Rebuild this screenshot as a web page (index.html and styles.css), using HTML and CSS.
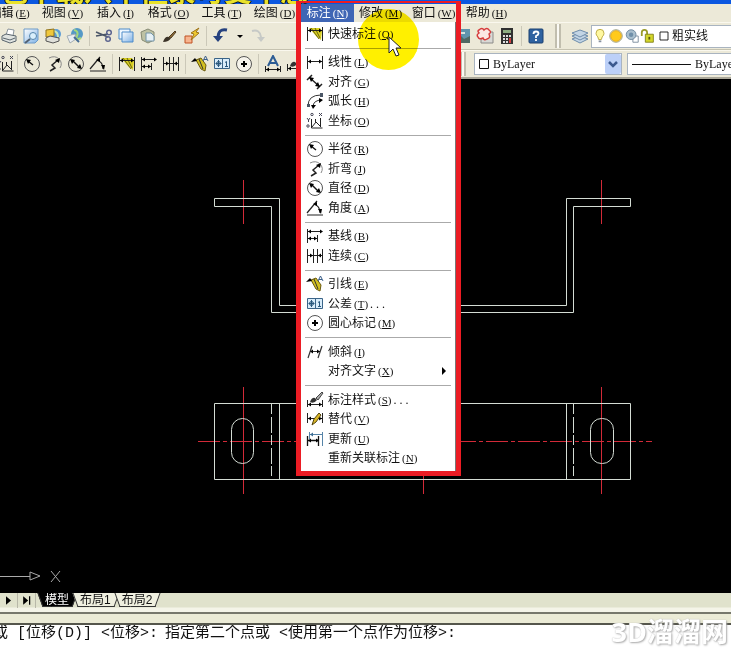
FILE: index.html
```html
<!DOCTYPE html>
<html lang="zh-CN">
<head>
<meta charset="utf-8">
<title>CAD</title>
<link rel="stylesheet" href="styles.css">
</head>
<body>
<svg class="defs" aria-hidden="true">
  <defs>
    <g id="al"><path d="M0 0L3-2V2z"/></g>
    <g id="ar"><path d="M0 0L-3-2V2z"/></g>
    <linearGradient id="blue" x1="0" y1="0" x2="1" y2="1"><stop offset="0" stop-color="#fff"/><stop offset="1" stop-color="#7fb2e6"/></linearGradient>
    <symbol id="quick" viewBox="0 0 18 18"><path d="M3 3h11l2 3-1 9-5-4z" fill="#d8cf20"/><path d="M5 3l8 11M9 3l5 10" stroke="#6b6410"/><path d="M1.500 2v14M16.500 2v14M2 5.500h14" stroke="#222" fill="none"/><use href="#al" x="2" y="5.500"/><use href="#ar" x="16" y="5.500"/></symbol>
    <symbol id="linear" viewBox="0 0 18 18"><path d="M1.500 3v13M16.500 3v13M2 8.500h14" stroke="#222" fill="none"/><use href="#al" x="2" y="8.500"/><use href="#ar" x="16" y="8.500"/></symbol>
    <symbol id="aligned" viewBox="0 0 18 18"><path d="M1 7l5-5M11 16l5-5M4 5l9 8" stroke="#222" stroke-width="1.500" fill="none"/><path d="M3 4l5 1-3 4zM14 14l-5-1 3-4z"/></symbol>
    <symbol id="arc" viewBox="0 0 18 18"><path d="M2 14Q2 3 15 3M7 15Q7 8 16 8" stroke="#333" fill="none"/><path d="M1 12h3v3H1zM14 1h3v4h-3z" fill="#4a5666"/><path d="M5 13h5l-3 4zM13 6l4 2-4 3z"/></symbol>
    <symbol id="ordinate" viewBox="0 0 18 18"><path d="M5.500 7v9h11M6 15l4-5 5 5M9.500 10V7M14.500 6v9" stroke="#222" fill="none"/><path d="M1 6l1.500 2L4 6M2.500 8v2M13 1l3 3M16 1l-3 3" stroke="#445" fill="none"/><circle cx="6" cy="2.500" r="1.200" fill="none" stroke="#445"/><circle cx="2" cy="14" r="1.200" fill="none" stroke="#445"/></symbol>
    <symbol id="radius" viewBox="0 0 18 18"><circle cx="9" cy="9" r="7.500" stroke="#555" fill="none"/><path d="M5 6l5 4" stroke="#111" stroke-width="1.500"/><path d="M3 4l5 1-3 4z"/></symbol>
    <symbol id="jog" viewBox="0 0 18 18"><path d="M4 3q6-3 10 1t1 9" stroke="#888" fill="none"/><path d="M5 16l5-3-3-3 6-5" stroke="#222" stroke-width="1.500" fill="none"/><path d="M15 3l-1 5-4-3z"/></symbol>
    <symbol id="diameter" viewBox="0 0 18 18"><circle cx="9" cy="9" r="7.500" stroke="#555" fill="none"/><path d="M5 5l8 8" stroke="#111" stroke-width="1.500"/><path d="M3 4l5 1-3 4zM15 14l-5-1 3-4z"/></symbol>
    <symbol id="angular" viewBox="0 0 18 18"><path d="M1 16h16M1 14L11 2M8 5q6 2 6 9" stroke="#222" stroke-width="1.200" fill="none"/><path d="M7 5l4-2v4zM12 10h4l-1 5z"/></symbol>
    <symbol id="baseline" viewBox="0 0 18 18"><path d="M1.500 2v14M2 4.500h14M11.500 8v7M2 11.500h9" stroke="#222" fill="none"/><use href="#al" x="2" y="4.500"/><use href="#ar" x="17" y="4.500"/><use href="#al" x="2" y="11.500"/><use href="#ar" x="11" y="11.500"/></symbol>
    <symbol id="continue" viewBox="0 0 18 18"><path d="M1.500 2v14M7.500 2v14M11.500 2v14M16.500 2v14M2 8.500h14" stroke="#222" fill="none"/><use href="#ar" x="7" y="8.500"/><use href="#al" x="12" y="8.500"/></symbol>
    <symbol id="leader" viewBox="0 0 18 18"><path d="M5 5l5-2 5 7-1 6-4-2z" fill="#d2c020" stroke="#6b5a10"/><path d="M8 4l4 10" stroke="#333"/><path d="M0 7l4-4 2 3z"/><path d="M12 6l2.500-5L17 6M13 4.500h3" stroke="#3b5f8a" fill="none"/></symbol>
    <symbol id="tolerance" viewBox="0 0 18 18"><path d="M1.500 3.500h15v10h-15z" fill="#d8ecfa" stroke="#3a6488"/><path d="M9.500 4v10" stroke="#3a6488"/><circle cx="5.500" cy="8.500" r="2" fill="none" stroke="#28577c"/><path d="M5.500 5v7M2.500 8.500h6M12 7.500l1.500-1v5M12 11.500h3" stroke="#28577c" fill="none"/></symbol>
    <symbol id="center" viewBox="0 0 18 18"><circle cx="9" cy="9" r="7.500" stroke="#555" fill="#fff" fill-opacity=".5"/><path d="M9 6v6M6 9h6" stroke="#000" stroke-width="2"/></symbol>
    <symbol id="oblique" viewBox="0 0 18 18"><path d="M2 15L6 3M12 15L16 3M5 8.500h9" stroke="#333" stroke-width="1.200" fill="none"/><use href="#al" x="4" y="8.500"/><use href="#ar" x="14" y="8.500"/></symbol>
    <symbol id="dimstyle" viewBox="0 0 18 18"><path d="M1.500 9v7M16.500 9v7M2 13.500h14" stroke="#222" fill="none"/><use href="#al" x="2" y="13.500"/><use href="#ar" x="16" y="13.500"/><path d="M4 11q2-5 5-4l2 2q-3 4-7 2z" fill="#333"/><path d="M10 7L16 1l1 1-5 7z" fill="#aaa" stroke="#444"/></symbol>
    <symbol id="override" viewBox="0 0 18 18"><path d="M1.500 3v10M16.500 3v10M2 8.500h14" stroke="#222" fill="none"/><use href="#al" x="2" y="8.500"/><use href="#ar" x="16" y="8.500"/><path d="M6 15l2-6 5-6 2 2-5 7z" fill="#d9b625" stroke="#54450e"/></symbol>
    <symbol id="update" viewBox="0 0 18 18"><path d="M3.500 2v7M16.500 2v14M4 4.500h12" stroke="#5684a8" fill="none"/><path d="M1.500 6v10M12.500 6v10M2 10.500h11" stroke="#111" stroke-width="1.300" fill="none"/><use href="#al" x="2" y="10.500"/><use href="#ar" x="13" y="10.500"/><use href="#al" x="4" y="4.500" fill="#3c6d94"/></symbol>
    <symbol id="textdim" viewBox="0 0 18 18"><path d="M4 11L9 1l5 10M6 8h6" stroke="#2c5c94" stroke-width="2" fill="none"/><path d="M1.500 11v6M16.500 11v6M2 14.500h14" stroke="#222" fill="none"/><use href="#al" x="2" y="14.500"/><use href="#ar" x="16" y="14.500"/></symbol>
    <symbol id="print" viewBox="0 0 18 18"><path d="M6 8l2-6 6 1-1 6z" fill="#fff" stroke="#8a949c"/><path d="M2 9l4-2 10 2v5l-6 2-8-3z" fill="#dfe3e0" stroke="#59646c"/><path d="M3 11l7 2 5-2" stroke="#59646c" fill="none"/></symbol>
    <symbol id="preview" viewBox="0 0 18 18"><path d="M2 2h14v11l-3 3H2z" fill="url(#blue)" stroke="#6c9ac8"/><circle cx="11" cy="9" r="3.500" fill="#d9effc" stroke="#5686ac"/><path d="M8 12l-5 4" stroke="#536273" stroke-width="2"/></symbol>
    <symbol id="publish" viewBox="0 0 18 18"><circle cx="12" cy="7" r="5" fill="#5e9ed6"/><path d="M10 4q4 1 4 6" stroke="#c9eab9" stroke-width="2" fill="none"/><path d="M2 3l8-1v7l-8 1z" fill="#f0c83c" stroke="#91731c"/><path d="M2 11l4-2 9 2v3l-6 2-7-2z" fill="#e0e0da" stroke="#555"/></symbol>
    <symbol id="web" viewBox="0 0 18 18"><circle cx="11" cy="7" r="6" fill="#5599c6"/><path d="M8 3q5 1 3 6t4 2" stroke="#a5d77c" stroke-width="2" fill="none"/><path d="M1 9l8-2 1 5-6 4z" fill="#e9edf1" stroke="#a3adb4"/><path d="M8 10l5 5" stroke="#456b95" stroke-width="2"/></symbol>
    <symbol id="cut" viewBox="0 0 18 18"><path d="M1 5l12 5M1 9l12-2" stroke="#4b5668" stroke-width="1.500"/><circle cx="14" cy="5.500" r="2.300" fill="none" stroke="#5c6590" stroke-width="1.500"/><circle cx="13" cy="12" r="2.300" fill="none" stroke="#5c6590" stroke-width="1.500"/></symbol>
    <symbol id="copy" viewBox="0 0 18 18"><path d="M2 2h11v10H2z" fill="#eef7ff" stroke="#4c8bc9"/><path d="M5 5h11v10H5z" fill="url(#blue)" stroke="#4c8bc9"/></symbol>
    <symbol id="paste" viewBox="0 0 18 18"><path d="M2 5l7-3 6 3v8l-6 3-6-3z" fill="#bec2a4" stroke="#858a74"/><path d="M7 6h5l3 3v5H7z" fill="#e6f0f5" stroke="#7394a8"/></symbol>
    <symbol id="brush" viewBox="0 0 18 18"><path d="M2 15q2-6 6-5l2 1q-2 4-8 4z" fill="#3c3428"/><path d="M8 10l6-6 1 1-5 6z" fill="#8e6a35" stroke="#4f3e23"/></symbol>
    <symbol id="blockedit" viewBox="0 0 18 18"><path d="M2 9h7v7H2z" fill="#f7b58f" stroke="#c05324"/><path d="M16 1l-8 5 3 1-3 6 8-7-3-1z" fill="#efc92e" stroke="#9c7218"/></symbol>
    <symbol id="undo" viewBox="0 0 18 18"><path d="M15 3Q6 1 6 11" stroke="#26427f" stroke-width="3" fill="none"/><path d="M1 9h10l-5 6z" fill="#26427f"/></symbol>
    <symbol id="redo" viewBox="0 0 18 18"><path d="M3 4Q11 2 12 10" stroke="#c6c9c6" stroke-width="2" fill="none"/><path d="M8 10h8l-4 5z" fill="#c6c9c6"/></symbol>
    <symbol id="drop" viewBox="0 0 18 18"><path d="M6 8h6L9 11z"/></symbol>
    <symbol id="image" viewBox="0 0 18 18"><path d="M0 2h16v14H0z" fill="#5f94ac"/><path d="M0 11l6-3 4 4 6-3v7H0z" fill="#4f6862"/><path d="M3 6h8" stroke="#d7e5df" stroke-width="2"/></symbol>
    <symbol id="cloud" viewBox="0 0 18 18"><path d="M5 5h12v11H5z" fill="#d9d9d5" stroke="#8b8b88"/><path d="M3 3q3-3 5 0 3-3 5 0 3 2 0 4 2 4-2 5-3 2-4-1-4 2-5-1-2-2 1-4-2-2 0-3z" fill="#fbe7e4" stroke="#d63c3c" stroke-width="1.500"/></symbol>
    <symbol id="calc" viewBox="0 0 18 18"><path d="M3 1h12v16H3z" fill="#303030"/><path d="M5 3h8v3H5z" fill="#8eae83"/><path d="M5 8h2v2H5zM8 8h2v2H8zM11 8h2v2h-2zM5 11h2v2H5zM8 11h2v2H8zM5 14h2v2H5zM8 14h2v2H8z" fill="#ddd"/><path d="M11 11h2v5h-2z" fill="#d04040"/></symbol>
    <symbol id="help" viewBox="0 0 18 18"><rect x="2" y="2" width="14" height="14" rx="1" fill="#2f62a0" stroke="#1c4170"/><path d="M6.500 7q0-2.500 2.500-2.500t2.500 2q0 1.500-2.500 2.500v2M9 12v2" stroke="#fff" stroke-width="1.800" fill="none"/></symbol>
    <symbol id="layers" viewBox="0 0 18 18"><g fill="#c3d5e5" stroke="#6f8dab"><path d="M1 12l8-3 8 3-8 4z"/><path d="M1 9l8-3 8 3-8 4z"/><path d="M1 6l8-3 8 3-8 4z"/></g></symbol>
    <symbol id="bulb" viewBox="0 0 18 18"><path d="M9 1.500q4.500 0 4.500 4.500 0 2-2 4l-1 3h-3l-1-3q-2-2-2-4 0-4.500 4.500-4.500z" fill="#fff8a0" stroke="#b7a53a"/><path d="M7.500 14h3v2h-3z" fill="#8791a0"/></symbol>
    <symbol id="sun" viewBox="0 0 18 18"><circle cx="9" cy="9" r="7" fill="none" stroke="#8b8f68"/><circle cx="9" cy="9" r="6" fill="#ffca1c" stroke="#e0a818"/></symbol>
    <symbol id="freeze" viewBox="0 0 18 18"><path d="M10 9h6v7h-6z" fill="#fff" stroke="#78889a"/><circle cx="8" cy="7.500" r="5.500" fill="#a9bfce" stroke="#68849c"/><circle cx="8" cy="7.500" r="2.500" fill="#6f8fa9"/></symbol>
    <symbol id="lock" viewBox="0 0 18 18"><path d="M2 9V5q0-3 3-3t3 3v5" stroke="#9a9a28" stroke-width="2" fill="none"/><path d="M6 7h9v9H6z" fill="#d3d62a" stroke="#7f8018"/><path d="M10.500 10v3" stroke="#55560c" stroke-width="2"/></symbol>
    <symbol id="square" viewBox="0 0 18 18"><path d="M4.500 4.500h9v9h-9z" fill="#fff" stroke="#111"/></symbol>
  </defs>
</svg>

<div class="app">
  <header class="title"><span class="caption">包下载八个但录可受牛怎</span><span class="caption dark">CAD 2006</span></header>

  <nav class="menubar">
    <button class="menu">编辑<kbd>(<u>E</u>)</kbd></button>
    <button class="menu">视图<kbd>(<u>V</u>)</kbd></button>
    <button class="menu">插入<kbd>(<u>I</u>)</kbd></button>
    <button class="menu">格式<kbd>(<u>O</u>)</kbd></button>
    <button class="menu">工具<kbd>(<u>T</u>)</kbd></button>
    <button class="menu">绘图<kbd>(<u>D</u>)</kbd></button>
    <button class="menu open">标注<kbd>(<u>N</u>)</kbd></button>
    <button class="menu">修改<kbd>(<u>M</u>)</kbd></button>
    <button class="menu">窗口<kbd>(<u>W</u>)</kbd></button>
    <button class="menu">帮助<kbd>(<u>H</u>)</kbd></button>
  </nav>

  <div class="toolbar">
    <div class="tools">
      <button aria-label="打印"><svg><use href="#print"/></svg></button>
      <button aria-label="预览"><svg><use href="#preview"/></svg></button>
      <button aria-label="发布"><svg><use href="#publish"/></svg></button>
      <button aria-label="网络"><svg><use href="#web"/></svg></button>
      <i class="sep"></i>
      <button aria-label="剪切"><svg><use href="#cut"/></svg></button>
      <button aria-label="复制"><svg><use href="#copy"/></svg></button>
      <button aria-label="粘贴"><svg><use href="#paste"/></svg></button>
      <button aria-label="特性匹配"><svg><use href="#brush"/></svg></button>
      <button aria-label="块编辑"><svg><use href="#blockedit"/></svg></button>
      <i class="sep"></i>
      <button aria-label="放弃"><svg><use href="#undo"/></svg></button>
      <button class="narrow" aria-label="放弃列表"><svg><use href="#drop"/></svg></button>
      <button aria-label="重做"><svg><use href="#redo"/></svg></button>
    </div>
    <div class="rest">
      <button aria-label="图纸集"><svg><use href="#image"/></svg></button>
      <button aria-label="标记集"><svg><use href="#cloud"/></svg></button>
      <button aria-label="计算器"><svg><use href="#calc"/></svg></button>
      <i class="sep"></i>
      <button aria-label="帮助"><svg><use href="#help"/></svg></button>
      <i class="grip"></i>
      <button aria-label="图层"><svg><use href="#layers"/></svg></button>
      <button class="layer"><svg><use href="#bulb"/></svg><svg><use href="#sun"/></svg><svg><use href="#freeze"/></svg><svg><use href="#lock"/></svg><svg><use href="#square"/></svg>粗实线</button>
    </div>
  </div>

  <div class="toolbar second">
    <div class="tools">
      <button class="edge" aria-label="坐标"><svg><use href="#ordinate"/></svg></button>
      <i class="sep"></i>
      <button aria-label="半径"><svg><use href="#radius"/></svg></button>
      <button aria-label="折弯"><svg><use href="#jog"/></svg></button>
      <button aria-label="直径"><svg><use href="#diameter"/></svg></button>
      <button aria-label="角度"><svg><use href="#angular"/></svg></button>
      <i class="sep"></i>
      <button aria-label="快速标注"><svg><use href="#quick"/></svg></button>
      <button aria-label="基线"><svg><use href="#baseline"/></svg></button>
      <button aria-label="连续"><svg><use href="#continue"/></svg></button>
      <i class="sep"></i>
      <button aria-label="引线"><svg><use href="#leader"/></svg></button>
      <button aria-label="公差"><svg><use href="#tolerance"/></svg></button>
      <button aria-label="圆心标记"><svg><use href="#center"/></svg></button>
      <i class="sep"></i>
      <button aria-label="编辑标注文字"><svg><use href="#textdim"/></svg></button>
      <button aria-label="标注样式"><svg><use href="#dimstyle"/></svg></button>
    </div>
    <div class="rest">
      <i class="grip"></i>
      <label class="combo color"><svg><use href="#square"/></svg><select aria-label="颜色"><option>ByLayer</option></select><span class="chevron"><svg viewBox="0 0 16 16"><path d="M4 6l4 4 4-4" fill="none" stroke="#3c5a90" stroke-width="2.500"/></svg></span></label>
      <label class="combo linetype"><i class="stroke"></i><select aria-label="线型"><option>ByLayer</option></select></label>
    </div>
  </div>

  <main class="canvas">
    <svg class="drawing" viewBox="0 79 731 514">
      <g fill="none" stroke="#d22a38">
        <path d="M243.500 180V224M601.500 180V224M243.500 387V494M601.500 387V494M423.500 466V494"/>
        <path d="M198 441.500H652" stroke-dasharray="22 3 4 3"/>
      </g>
      <g fill="none" stroke="#d4dcd4">
        <path d="M214.500 198.500H279.500V305.500H566.500V198.500H630.500V206.500H573.500V312.500H271.500V206.500H214.500z"/>
        <path d="M214.500 403.500H630.500V479.500H214.500zM279.500 403V479M566.500 403V479"/>
        <path d="M271.500 404V479M573.500 404V479" stroke-dasharray="10 3 16 2"/>
        <rect x="231.500" y="418.500" width="22" height="45" rx="11"/>
        <rect x="590.500" y="418.500" width="23" height="45" rx="11"/>
      </g>
      <g fill="none" stroke="#aaa">
        <path d="M0 576.500H30M30 572l10 4-10 4zM51 571l9 11M60 571l-9 11"/>
      </g>
    </svg>
  </main>

  <div class="tabs">
    <button class="step" aria-label="下一个"><svg viewBox="0 0 18 18"><path d="M6 4l6 5-6 5z"/></svg></button>
    <button class="step" aria-label="最后"><svg viewBox="0 0 18 18"><path d="M5 4l6 5-6 5zM12 4h1.500v10H12z"/></svg></button>
    <button class="tab current">模型</button>
    <button class="tab">布局1</button>
    <button class="tab">布局2</button>
  </div>
  <div class="splitter"></div>
  <footer class="command"><span>或 [位移(D)] &lt;位移&gt;:</span><span>指定第二个点或 &lt;使用第一个点作为位移&gt;:</span></footer>

  <div class="glow"></div>
  <div class="dropdown">
    <button><svg><use href="#quick"/></svg>快速标注<kbd>(<u>Q</u>)</kbd></button>
    <hr>
    <button><svg><use href="#linear"/></svg>线性<kbd>(<u>L</u>)</kbd></button>
    <button><svg><use href="#aligned"/></svg>对齐<kbd>(<u>G</u>)</kbd></button>
    <button><svg><use href="#arc"/></svg>弧长<kbd>(<u>H</u>)</kbd></button>
    <button><svg><use href="#ordinate"/></svg>坐标<kbd>(<u>O</u>)</kbd></button>
    <hr>
    <button><svg><use href="#radius"/></svg>半径<kbd>(<u>R</u>)</kbd></button>
    <button><svg><use href="#jog"/></svg>折弯<kbd>(<u>J</u>)</kbd></button>
    <button><svg><use href="#diameter"/></svg>直径<kbd>(<u>D</u>)</kbd></button>
    <button><svg><use href="#angular"/></svg>角度<kbd>(<u>A</u>)</kbd></button>
    <hr>
    <button><svg><use href="#baseline"/></svg>基线<kbd>(<u>B</u>)</kbd></button>
    <button><svg><use href="#continue"/></svg>连续<kbd>(<u>C</u>)</kbd></button>
    <hr>
    <button><svg><use href="#leader"/></svg>引线<kbd>(<u>E</u>)</kbd></button>
    <button><svg><use href="#tolerance"/></svg>公差<kbd>(<u>T</u>)</kbd><span class="dots">. . .</span></button>
    <button><svg><use href="#center"/></svg>圆心标记<kbd>(<u>M</u>)</kbd></button>
    <hr>
    <button><svg><use href="#oblique"/></svg>倾斜<kbd>(<u>I</u>)</kbd></button>
    <button><svg></svg>对齐文字<kbd>(<u>X</u>)</kbd><svg class="more" viewBox="0 0 8 8"><path d="M2 0l4 4-4 4z"/></svg></button>
    <hr>
    <button><svg><use href="#dimstyle"/></svg>标注样式<kbd>(<u>S</u>)</kbd><span class="dots">. . .</span></button>
    <button><svg><use href="#override"/></svg>替代<kbd>(<u>V</u>)</kbd></button>
    <button><svg><use href="#update"/></svg>更新<kbd>(<u>U</u>)</kbd></button>
    <button><svg></svg>重新关联标注<kbd>(<u>N</u>)</kbd></button>
  </div>
  <div class="frame"></div>
  <svg class="pointer" viewBox="0 0 14 22"><path d="M1 1v16l4-4 3 7 3-1-3-7h5z" fill="#fff" stroke="#222"/></svg>
  <div class="watermark">3D溜溜网</div>
</div>
</body>
</html>
```
FILE: styles.css
```css
* { box-sizing: border-box; }
body {
  margin: 0;
  font: 12px/16px "Liberation Serif", "Noto Sans CJK SC", serif;
  color: #111;
}
button, select {
  margin: 0;
  padding: 0;
  border: 0;
  background: none;
  font: inherit;
  color: inherit;
}
svg { width: 18px; height: 18px; flex: none; display: block; }
.defs { position: absolute; width: 0; height: 0; }
kbd { font: 11px/16px "Liberation Serif", serif; margin-left: 2px; }

.app {
  position: relative;
  display: flex;
  flex-direction: column;
  height: 100vh;
  overflow: hidden;
  background: #ece9d8;
}

/* Title strip */
.title {
  display: flex;
  gap: 162px;
  height: 4px;
  overflow: hidden;
  background: #0b57e0;
  align-items: flex-end;
}
.caption {
  flex: none;
  font: bold 28px/28px "Noto Sans CJK SC", sans-serif;
  color: #e9e22a;
  text-shadow: 1px 0 #111, -1px 0 #111, 0 1px #111;
}
.caption.dark { font-size: 20px; color: #111; }

/* Menu bar */
.menubar { display: flex; height: 18px; margin-left: -17px; flex: none; }
.menu { width: 53px; flex: none; white-space: nowrap; }
.menu.open { background: #3f66b5; color: #fff; }

/* Toolbars */
.toolbar {
  display: flex;
  height: 28px;
  flex: none;
  border-top: 1px solid #faf8ee;
  border-bottom: 1px solid #c5c2b0;
}
.toolbar.second { height: 29px; border-bottom: 2px solid #a9a698; }
.tools { display: flex; align-items: center; flex: 0 0 454px; margin-left: -2px; overflow: hidden; }
.rest { display: flex; align-items: center; flex: 1; min-width: 0; }
.toolbar button { width: 22px; flex: none; display: flex; justify-content: center; align-items: center; }
.toolbar .narrow { width: 15px; }
.toolbar .edge { width: 16px; }
.sep { width: 1px; height: 20px; margin: 0 3px; background: #cbc8b8; flex: none; }
.grip {
  width: 6px;
  height: 24px;
  margin: 0 8px;
  flex: none;
  border: solid #c1beae;
  border-width: 0 2px;
  background: #fbfaf4;
}
.toolbar .layer {
  flex: 1;
  height: 23px;
  justify-content: flex-start;
  background: #fff;
  border: 1px solid #a9b4c0;
  border-right: 0;
  white-space: nowrap;
}
.layer svg { width: 16px; }
.combo { display: flex; align-items: center; height: 22px; background: #fff; border: 1px solid #a9b4c0; }
.combo select { appearance: none; flex: 1; min-width: 0; font: 12px/16px "Liberation Serif", serif; }
.color { width: 148px; flex: none; }
.linetype { flex: 1; margin-left: 5px; border-right: 0; overflow: hidden; }
.linetype .stroke { width: 59px; height: 1px; margin: 0 4px; background: #111; flex: none; }
.chevron { background: #bcd0f8; padding: 2px 0; border-radius: 2px; }
.chevron svg { width: 16px; height: 16px; }

/* Drawing area */
.canvas { flex: 1; min-height: 0; background: #000; overflow: hidden; }
.drawing { width: 731px; height: 514px; }

/* Layout tabs */
.tabs { display: flex; height: 21px; flex: none; align-items: flex-start; background: linear-gradient(#e0e2cc 14px, #f4f4e8 15px); border-bottom: 2px solid #77786c; }
.step { width: 18px; height: 15px; border-right: 1px solid #b8b8a8; }
.step svg { height: 15px; width: 17px; }
.tab { position: relative; height: 14px; padding: 0 6px 0 5px; z-index: 0; font: 12px/13px "Liberation Sans", "Noto Sans CJK SC", sans-serif; }
.tab::before, .tab::after {
  content: "";
  position: absolute;
  z-index: -1;
  top: 0;
  bottom: 0;
  border-bottom: 1px solid #333;
  background: #efefdf;
}
.tab::before { left: 0; right: 50%; border-left: 1px solid #333; transform: skewX(20deg); }
.tab::after { right: 0; left: 40%; border-right: 1px solid #333; transform: skewX(-20deg); }
.tab.current { margin-left: 4px; color: #fff; }
.tab.current::before, .tab.current::after { background: #000; }

/* Command line */
.splitter { height: 11px; flex: none; background: #ebebd6; border-bottom: 2px solid #55564c; }
.command {
  display: flex;
  gap: 14px;
  height: 23px;
  flex: none;
  text-indent: -7px;
  overflow: hidden;
  background: #fff;
  font: 15px/18px "Liberation Mono", "Noto Sans CJK SC", monospace;
  white-space: nowrap;
}

/* Open menu */
.dropdown {
  position: absolute;
  left: 301px;
  top: 22px;
  width: 155px;
  height: 450px;
  display: flex;
  flex-direction: column;
  padding: 2px 4px 3px;
  background: #fff;
  border-right: 1px solid #777;
  border-bottom: 1px solid #777;
}
.dropdown button { flex: 1; min-height: 0; display: flex; align-items: center; white-space: nowrap; padding-left: 1px; }
.dropdown button > svg:first-child { margin-right: 4px; }
.dropdown hr { width: 100%; height: 9px; margin: 0; border: 0; flex: none; background: linear-gradient(#fff 4px, #aaa 4px, #aaa 5px, #fff 5px); }
.dots { margin-left: 2px; }
.dropdown .more { width: 8px; height: 8px; margin-left: auto; margin-right: 3px; }
.glow {
  position: absolute;
  z-index: 2;
  left: 358px;
  top: 9px;
  width: 61px;
  height: 61px;
  border-radius: 50%;
  background: #fff000;
  mix-blend-mode: multiply;
}
.frame { position: absolute; z-index: 3; left: 296px; top: 1px; width: 165px; height: 475px; border: 5px solid #ec1c24; border-top-width: 2px; pointer-events: none; }
.pointer { position: absolute; z-index: 4; left: 388px; top: 36px; width: 14px; height: 22px; }
.watermark {
  position: absolute;
  right: 3px;
  bottom: 1px;
  font: bold 27px/30px "Open Sans", "Noto Sans CJK SC", sans-serif;
  color: #fff;
  text-shadow: 1px 1px 2px #aaa, 0 0 1px #bbb;
}
```
